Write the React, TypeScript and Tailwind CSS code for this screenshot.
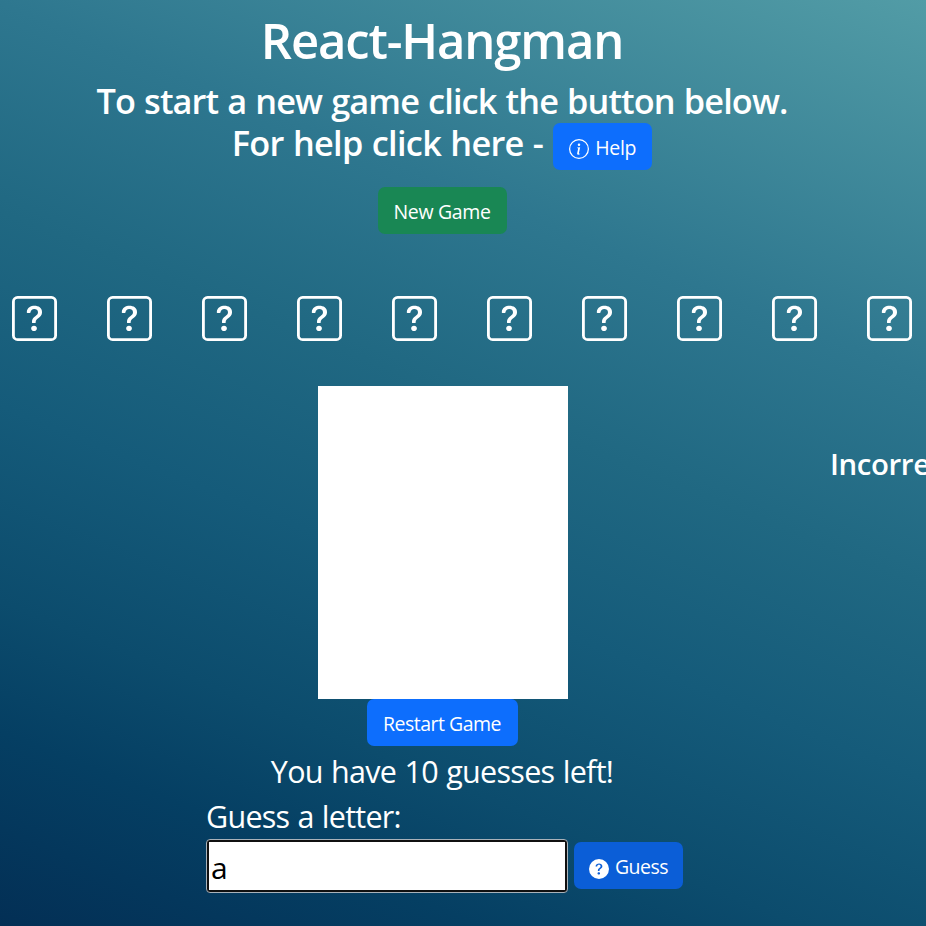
import React from "react";
import { BsInfoCircle, BsQuestionCircleFill, BsQuestionSquare } from "react-icons/bs";

const LETTERS = Array.from({ length: 10 }, (_, i) => i);

function Button({ className, children }: { className: string; children: React.ReactNode }) {
  return (
    <button
      className={`flex h-[47px] shrink-0 items-center justify-center rounded-[7px] pt-[3px] text-[19.5px] leading-[30px] font-normal whitespace-nowrap ${className}`}
    >
      {children}
    </button>
  );
}

export default function App() {
  return (
    <div className="h-[926px] w-[926px] overflow-hidden bg-[linear-gradient(22deg,#032f55_0%,#053f63_15%,#0c4c6d_25%,#155b7a_40%,#206882_55%,#2e778f_71%,#529ca6_100%)] font-['Open_Sans','Noto_Sans',sans-serif] text-white">
      <header className="flex w-[884px] flex-col items-center pt-[10px]">
        <h1 className="text-[49px] leading-[60px] font-semibold whitespace-nowrap tracking-[-1.15px]">React-Hangman</h1>
        <h3 className="mt-[10px] text-center text-[34.3px] leading-[42px] font-semibold whitespace-nowrap tracking-[-0.88px] [word-spacing:1px]">
          To start a new game click the button below.
        </h3>
        <div className="flex h-[47px] items-start">
          <h3 className="mr-[10px] text-[34.3px] leading-[42px] font-semibold whitespace-nowrap tracking-[-0.7px] [word-spacing:1px]">For help click here -</h3>
          <Button className="mt-[0.5px] w-[99px] gap-[6px] bg-[#0d6efd] tracking-[-0.3px]">
            <BsInfoCircle className="mt-[3px] size-[20px]" />
            <span>Help</span>
          </Button>
        </div>
        <div className="mt-[18.4px] flex">
          <Button className="w-[129px] bg-[#198754] tracking-[-0.35px]">New Game</Button>
        </div>
      </header>

      <div className="mt-[62px] flex gap-[50px] pl-[12.4px]">
        {LETTERS.map((i) => (
          <BsQuestionSquare key={i} className="size-[45px] shrink-0" />
        ))}
      </div>

      <div className="mt-[45.1px] flex h-[312.5px] pl-[317.5px]">
        <div className="w-[250px] shrink-0 bg-white" />
        <h4 className="mt-[60px] ml-[262.5px] text-[29.4px] leading-[36px] font-semibold whitespace-nowrap tracking-[-0.4px]">Incorrect</h4>
      </div>

      <div className="flex w-[884px] flex-col items-center">
        <Button className="w-[151px] bg-[#0d6efd] tracking-[-0.5px]">Restart Game</Button>
        <p className="mt-[2px] text-[30.5px] leading-[46px] whitespace-nowrap tracking-[-0.7px] [word-spacing:1px]">You have 10 guesses left!</p>
      </div>

      <form className="pl-[206px]" onSubmit={(e) => e.preventDefault()}>
        <label className="block text-[30.5px] leading-[45px] whitespace-nowrap tracking-[-0.75px] [word-spacing:1px]">Guess a letter:</label>
        <div className="flex items-center">
          <div className="rounded-[4px] border border-[#a9b2ba] bg-[#101010] p-[2px]">
            <input
              className="block h-[48px] w-[356px] bg-white px-[2px] pt-[3px] text-[30px] text-black outline-none"
              defaultValue="a"
            />
          </div>
          <Button className="ml-[6px] w-[109px] gap-[6px] bg-[#0b5ed7] tracking-[-0.5px]">
            <BsQuestionCircleFill className="mt-[4px] size-[20px]" />
            <span>Guess</span>
          </Button>
        </div>
      </form>
    </div>
  );
}
